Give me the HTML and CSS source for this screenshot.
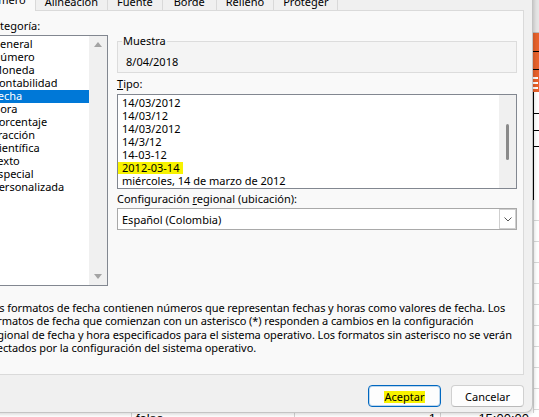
FILE: index.html
```html
<!DOCTYPE html>
<html lang="es">
<head>
<meta charset="utf-8">
<title>Formato de celdas</title>
<link rel="stylesheet" href="styles.css">
</head>
<body>
<div class="screen">
  <div class="stage">
    <div class="dialog">
      <div class="tabs">
        <div class="tab active">Número</div>
        <div class="tab">Alineación</div>
        <div class="tab">Fuente</div>
        <div class="tab">Borde</div>
        <div class="tab">Relleno</div>
        <div class="tab">Proteger</div>
      </div>
      <div class="panel">
        <div class="top">
          <div class="col-left">
            <div class="label cat-label">Categoría:</div>
            <div class="listbox cat">
              <ul class="items">
                <li>General</li>
                <li>Número</li>
                <li>Moneda</li>
                <li>Contabilidad</li>
                <li class="sel">Fecha</li>
                <li>Hora</li>
                <li>Porcentaje</li>
                <li>Fracción</li>
                <li>Científica</li>
                <li>Texto</li>
                <li>Especial</li>
                <li>Personalizada</li>
              </ul>
              <div class="vscroll">
                <span class="arrow"><svg width="8" height="5" viewBox="0 0 8 5"><polygon points="4,0 8,5 0,5" fill="#a3a3a3"/></svg></span>
                <span class="arrow"><svg width="8" height="5" viewBox="0 0 8 5"><polygon points="0,0 8,0 4,5" fill="#a3a3a3"/></svg></span>
              </div>
            </div>
          </div>
          <div class="col-right">
            <fieldset class="sample">
              <legend>Muestra</legend>
              <div class="value">8/04/2018</div>
            </fieldset>
            <div class="label tipo"><u>T</u>ipo:</div>
            <div class="listbox tipo-list">
              <ul class="items">
                <li>14/03/2012</li>
                <li>14/03/12</li>
                <li>14/03/2012</li>
                <li>14/3/12</li>
                <li>14-03-12</li>
                <li class="hl-item"><span>2012-03-14</span></li>
                <li>miércoles, 14 de marzo de 2012</li>
              </ul>
              <div class="thinscroll"><div class="thumb"></div></div>
            </div>
            <div class="label cfg">Configuración <u>r</u>egional (ubicación):</div>
            <div class="combo">
              <span class="combo-text">Español (Colombia)</span>
              <span class="combo-btn"><svg width="8" height="5" viewBox="0 0 8 5"><path d="M0.5 0.5 L4 4 L7.5 0.5" fill="none" stroke="#555" stroke-width="1"/></svg></span>
            </div>
          </div>
        </div>
        <p class="desc">Los formatos de fecha contienen números que representan fechas y horas como valores de fecha. Los<br>formatos de fecha que comienzan con un asterisco (*) responden a cambios en la configuración<br>regional de fecha y hora especificados para el sistema operativo. Los formatos sin asterisco no se verán<br>afectados por la configuración del sistema operativo.</p>
      </div>
      <div class="buttons">
        <button class="btn primary"><span class="hl">Aceptar</span></button>
        <button class="btn">Cancelar</button>
      </div>
    </div>
    <div class="sheet-right">
      <div class="xh"></div>
      <div class="xo xo1"></div>
      <div class="xo xo2"></div>
      <div class="xo xo3"><div class="bars"></div></div>
      <div class="xblack">
        <div class="xb xb1"></div>
        <div class="xb xb2"></div>
        <div class="xb xb3"></div>
      </div>
      <div class="xg"></div>
    </div>
  </div>
  <div class="sheet-bottom">
    <div class="c c1"></div>
    <div class="c c2">falso</div>
    <div class="c c3">1</div>
    <div class="c c4">15:00:00</div>
  </div>
</div>
</body>
</html>
```

FILE: styles.css
```css
* { box-sizing: border-box; }

body {
  margin: 0;
  width: 539px;
  height: 417px;
  overflow: hidden;
  background: #ffffff;
  font-family: "Noto Sans", "DejaVu Sans", sans-serif;
  font-size: 11px;
  color: #000;
}

.screen {
  width: 539px;
  height: 417px;
  overflow: hidden;
  display: flex;
  flex-direction: column;
}

.stage {
  display: flex;
  height: 413px;
  flex-shrink: 0;
}

.dialog {
  flex: 0 0 563px;
  width: 563px;
  height: 427px;
  margin: -14px 0 0 -30px;
  padding: 2px 8px 5px 12px;
  background: #f0f0f0;
  border-right: 1px solid #c4c4c4;
  border-bottom: 1px solid #c4c4c4;
  border-bottom-right-radius: 8px;
  box-shadow: 1px 1px 4px rgba(0, 0, 0, 0.18);
  position: relative;
  z-index: 1;
  display: flex;
  flex-direction: column;
}

/* tabs */
.tabs {
  display: flex;
  align-items: flex-end;
  height: 22px;
  margin-left: -9px;
  flex-shrink: 0;
}

.tab {
  height: 22px;
  min-width: 54px;
  padding: 5px 9px 0;
  line-height: 15px;
  text-align: center;
  white-space: nowrap;
  background: #f0f0f0;
  border-top: 1px solid #d9d9d9;
  border-right: 1px solid #d9d9d9;
}

.tab.active {
  height: 25px;
  margin-bottom: -1px;
  background: #f9f9f9;
  border-left: 1px solid #d9d9d9;
  position: relative;
  z-index: 1;
}

/* panel */
.panel {
  height: 365px;
  flex-shrink: 0;
  background: #f9f9f9;
  border: 1px solid #dadada;
  padding: 7px 6px 0 4px;
}

.top {
  display: grid;
  grid-template-columns: 121px 400px;
  column-gap: 9px;
  align-items: start;
}

.label {
  line-height: 15px;
  white-space: nowrap;
}

.cat-label { margin-bottom: 2px; }

.listbox {
  display: flex;
  border: 1px solid #828790;
  background: #ffffff;
  overflow: hidden;
}

.cat { height: 251px; }

.items {
  list-style: none;
  margin: 0;
  padding: 2px 0 0;
  flex: 1;
  min-width: 0;
  overflow: hidden;
}

.items li {
  height: 13px;
  line-height: 11px;
  padding: 0 0 2px 4px;
  white-space: nowrap;
}

.cat .items li.sel {
  background: #0078d7;
  color: #ffffff;
}

.vscroll {
  width: 18px;
  flex-shrink: 0;
  background: #f0f0f0;
  display: flex;
  flex-direction: column;
  justify-content: space-between;
}

.arrow {
  height: 17px;
  display: flex;
  align-items: center;
  justify-content: center;
}

.arrow svg { display: block; }

/* sample */
.sample {
  margin: 16px 0 0;
  padding: 6px 8px 3px;
  border: 1px solid #dcdcdc;
  background: #f4f4f4;
  min-width: 0;
}

.sample legend {
  padding: 0 1px;
  margin-left: -4px;
  line-height: 14px;
}

.sample .value { line-height: 15px; }

.tipo { margin: 3px 0; }

.tipo-list { height: 95px; }

.hl-item span {
  display: inline-block;
  vertical-align: top;
  line-height: 11px;
  padding: 0 4px 1px 6px;
  margin-left: -6px;
  background: #f8f300;
}

.thinscroll {
  width: 17px;
  flex-shrink: 0;
  background: #f0f0f0;
  padding-top: 29px;
  display: flex;
  justify-content: center;
  align-items: flex-start;
}

.thumb {
  width: 3px;
  height: 36px;
  background: #8a8a8a;
  border-radius: 2px;
}

.cfg { margin: 2px 0; }

.combo {
  height: 22px;
  border: 1px solid #a9a9a9;
  background: #ffffff;
  display: flex;
  align-items: center;
}

.combo-text {
  flex: 1;
  padding-left: 4px;
  line-height: 15px;
  white-space: nowrap;
}

.combo-btn {
  width: 17px;
  height: 20px;
  border: 1px solid #cfcfcf;
  background: #ffffff;
  display: flex;
  align-items: center;
  justify-content: center;
}

.combo-btn svg { display: block; }

.desc {
  margin: 15px 0 0;
  line-height: 13.4px;
  letter-spacing: -0.08px;
  white-space: nowrap;
}

/* buttons */
.buttons {
  display: flex;
  justify-content: flex-end;
  gap: 10px;
  margin-top: 10px;
  flex-shrink: 0;
}

.btn {
  width: 73px;
  height: 22px;
  padding: 0;
  font-family: inherit;
  font-size: 11px;
  line-height: 15px;
  color: #000;
  background: #fdfdfd;
  border: 1px solid #d0d0d0;
  border-bottom-color: #b9b9b9;
  border-radius: 4px;
}

.btn.primary {
  border: 1px solid #0067c0;
  box-shadow: inset 0 0 0 1px rgba(0, 103, 192, 0.25);
}

.hl {
  display: inline-block;
  line-height: 11px;
  padding: 0 1px 1px;
  background: #f8f300;
}

/* worksheet behind the dialog */
.sheet-right {
  flex: 0 0 6px;
  display: flex;
  flex-direction: column;
  background: #ffffff;
}

.xh {
  height: 33px;
  background: #e6e6e6;
  border-bottom: 1px solid #bdbdbd;
}

.xo { background: #e8622c; }
.xo1 { height: 19px; border-bottom: 1px solid #000; }
.xo2 { height: 18px; border-bottom: 1px solid #000; }
.xo3 { height: 22px; padding-top: 7px; }

.bars {
  width: 5px;
  height: 12px;
  background: repeating-linear-gradient(to bottom, #ffffff 0 2px, transparent 2px 5px);
}

.xblack {
  height: 108px;
  border-left: 1px solid #000;
}

.xb { border-bottom: 1px solid #000; }
.xb1 { height: 22px; }
.xb2 { height: 17px; }
.xb3 { height: 16px; }

.xg {
  flex: 1;
  border-left: 1px solid #d4d4d4;
  background: repeating-linear-gradient(to bottom, #ffffff 0 20px, #d9d9d9 20px 21px);
}

.sheet-bottom {
  height: 4px;
  flex-shrink: 0;
  display: flex;
  overflow: hidden;
  background: #ffffff;
  font-family: "Liberation Sans", sans-serif;
  font-size: 13px;
}

.c {
  line-height: 12px;
  white-space: nowrap;
  overflow: hidden;
  border-right: 1px solid #d4d4d4;
}

.c1 { width: 132px; }
.c2 { width: 163px; padding-left: 4px; }
.c3 { width: 146px; text-align: right; padding-right: 4px; }
.c4 { flex: 1; text-align: right; padding-right: 10px; border-right: 0; }
```
